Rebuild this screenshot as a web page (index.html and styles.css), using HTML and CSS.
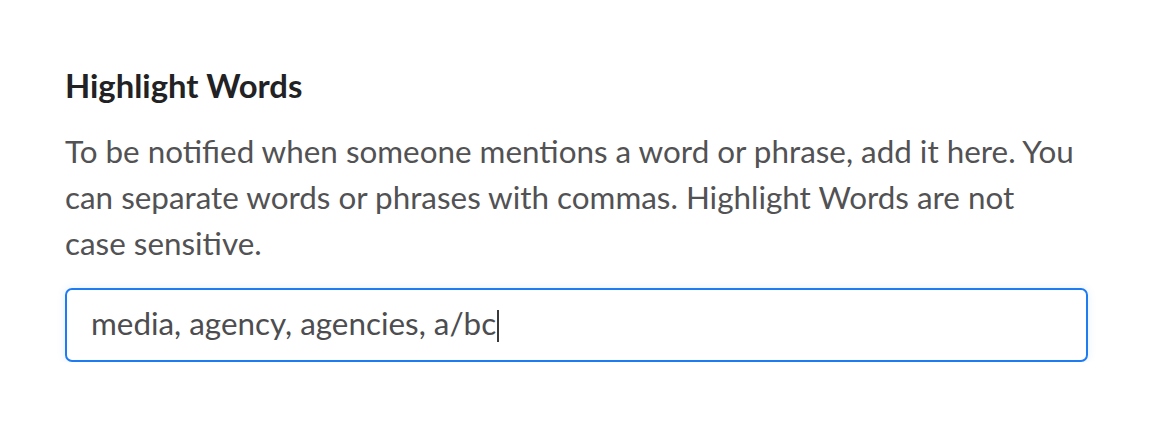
FILE: index.html
```html
<!DOCTYPE html>
<html>
<head>
<meta charset="utf-8">
<link rel="stylesheet" href="styles.css">
</head>
<body>
<section class="setting">
  <h2 class="title">Highlight Words</h2>
  <p class="desc">To be notified when someone mentions a word or phrase, add it here. You can separate words or phrases with commas. Highlight Words are not case sensitive.</p>
  <div class="field"><span class="value">media, agency, agencies, a/bc</span><span class="caret"></span></div>
</section>
</body>
</html>
```
FILE: styles.css
```css
html, body {
  margin: 0;
  padding: 0;
  background: #ffffff;
}
.setting {
  font-family: Lato, "Open Sans", sans-serif;
  padding: 66px 0 0 65px;
  width: 1023px;
}
.title {
  margin: 0;
  font-size: 32.8px;
  font-weight: 700;
  line-height: 40px;
  color: #222224;
}
.desc {
  margin: 22px 0 0 0;
  width: 1012px;
  font-size: 31.4px;
  font-weight: 400;
  line-height: 46px;
  color: #525254;
}
.field {
  margin-top: 22px;
  box-sizing: border-box;
  height: 74px;
  border: 2px solid #1d7cf2;
  border-radius: 7px;
  box-shadow: 0 0 8px rgba(29, 124, 242, 0.12);
  display: flex;
  align-items: center;
  padding: 0 0 4px 24px;
  font-size: 31.4px;
  color: #4d4d50;
}
.caret {
  display: block;
  width: 2px;
  height: 32px;
  margin-top: 6px;
  background: #3a3a3c;
  margin-left: 1px;
}
```
